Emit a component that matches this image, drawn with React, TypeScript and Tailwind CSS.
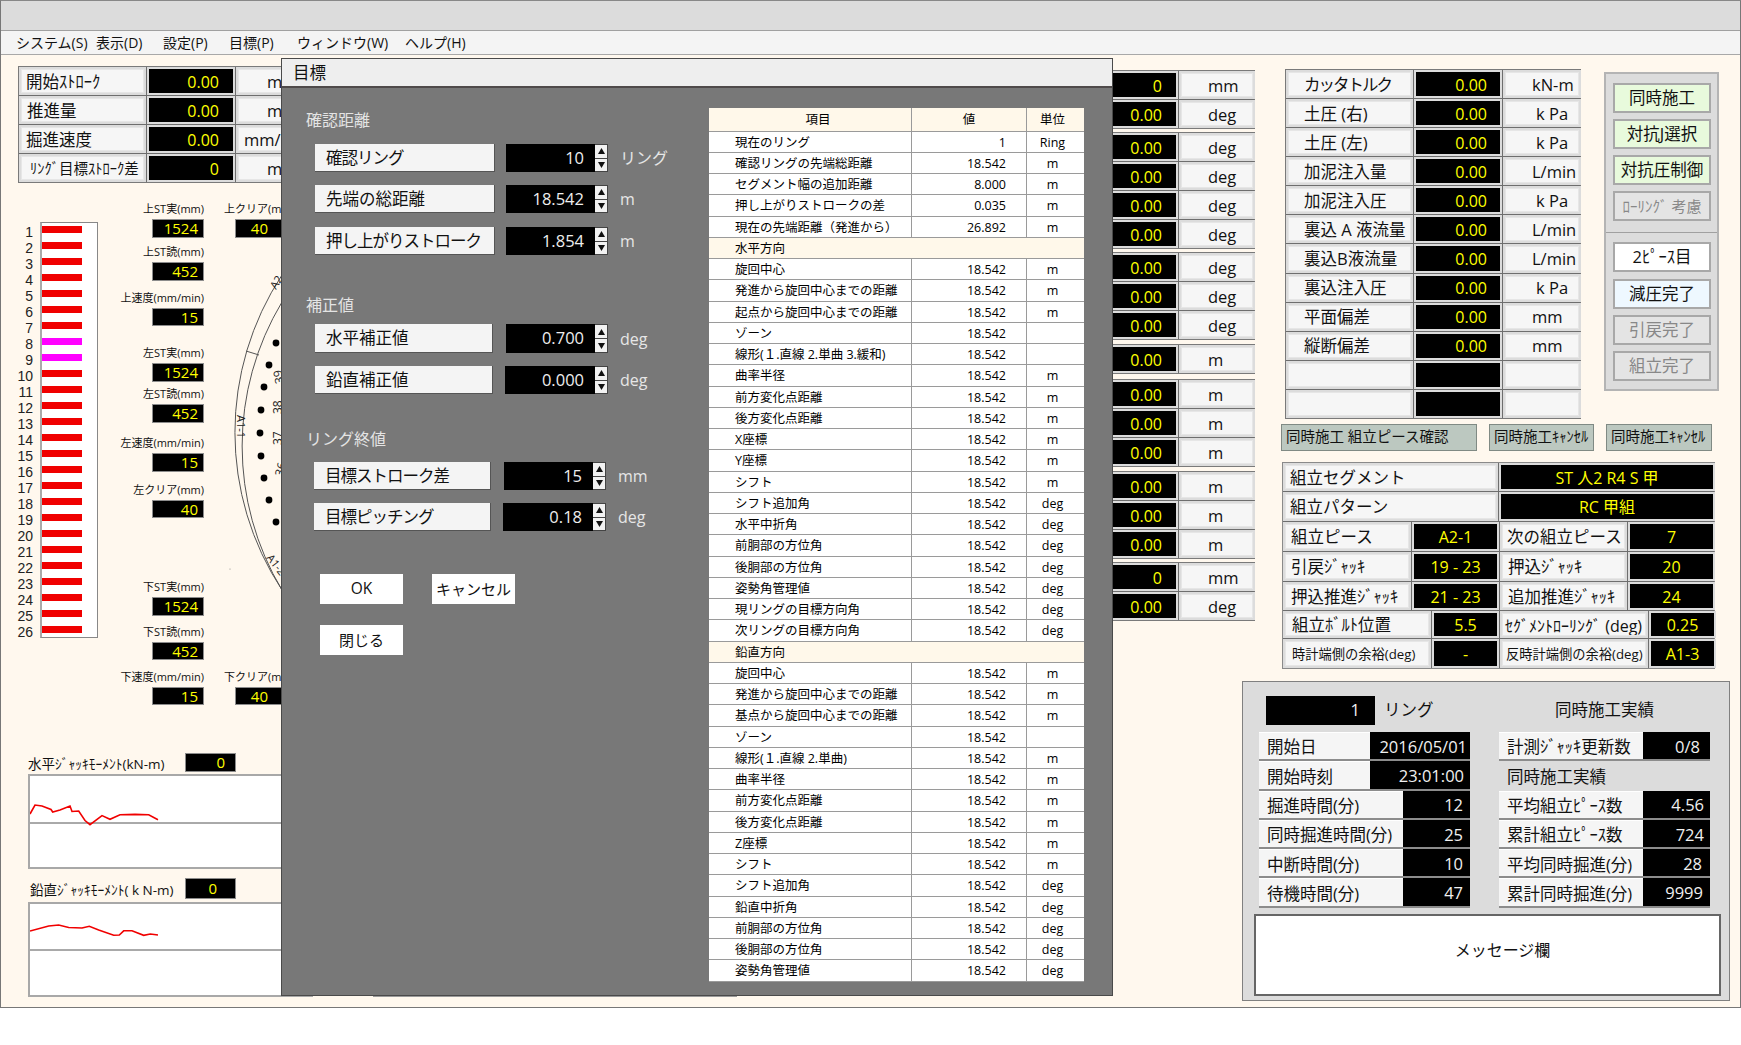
import React from "react";

const LabelCell = ({ children, className = "", pad = "pl-[14px]", size = "text-[16.5px]" }: any) => (
  <div className={`bg-[#dcdcdc] p-[2px] min-w-0 ${className}`}>
    <div className={`h-full flex items-center whitespace-nowrap overflow-hidden bg-[#f6f6f6] border border-[#e6e6e6] text-[#111] leading-none pt-[2px] ${pad} ${size}`}>
      {children}
    </div>
  </div>
);

const ValCell = ({ children, pr = "pr-[14px]", align = "justify-end" }: any) => (
  <div className="bg-[#dcdcdc] p-[2px] min-w-0">
    <div className={`h-full flex items-center bg-black text-[#ffff00] text-[16px] leading-none whitespace-nowrap pt-[1px] ${align} ${pr}`}>{children}</div>
  </div>
);

const GridTable = ({ cols, rows, className = "", children }: any) => (
  <div className={`grid gap-px bg-[#6e6e6e] border border-[#7a7a7a] ${cols} ${rows} ${className}`}>{children}</div>
);

const topLeft = [
  ["開始ｽﾄﾛｰｸ", "0.00", "m", "text-[16.5px]", "pl-[4px]", "pl-[28px]"],
  ["推進量", "0.00", "mm", "text-[16.5px]", "pl-[5px]", "pl-[28px]"],
  ["掘進速度", "0.00", "mm/min", "text-[16.5px]", "pl-[4px]", "pl-[5px]"],
  ["ﾘﾝｸﾞ目標ｽﾄﾛｰｸ差", "0", "mm", "text-[14.5px]", "pl-[8px]", "pl-[28px]"],
];

const readoutGroups = [
  { mt: "mt-[1px]", rows: [["0", "mm"], ["0.00", "deg"]] },
  { mt: "mt-[3px]", rows: [["0.00", "deg"], ["0.00", "deg"], ["0.00", "deg"], ["0.00", "deg"]] },
  { mt: "mt-[3px]", rows: [["0.00", "deg"], ["0.00", "deg"], ["0.00", "deg"]] },
  { mt: "mt-[4px]", rows: [["0.00", "m"]] },
  { mt: "mt-[5px]", rows: [["0.00", "m"], ["0.00", "m"], ["0.00", "m"]] },
  { mt: "mt-[4px]", rows: [["0.00", "m"], ["0.00", "m"], ["0.00", "m"]] },
  { mt: "mt-[3px]", rows: [["0", "mm"], ["0.00", "deg"]] },
];

const central = [
  ["カッタトルク", "0.00", "kN-m", "pl-[26px]"],
  ["土圧 (右)", "0.00", "k Pa", "pl-[30px]"],
  ["土圧 (左)", "0.00", "k Pa", "pl-[30px]"],
  ["加泥注入量", "0.00", "L/min", "pl-[26px]"],
  ["加泥注入圧", "0.00", "k Pa", "pl-[30px]"],
  ["裏込 A 液流量", "0.00", "L/min", "pl-[26px]"],
  ["裏込B液流量", "0.00", "L/min", "pl-[26px]"],
  ["裏込注入圧", "0.00", "k Pa", "pl-[30px]"],
  ["平面偏差", "0.00", "mm", "pl-[26px]"],
  ["縦断偏差", "0.00", "mm", "pl-[26px]"],
  ["", "", "", "pl-[26px]"],
  ["", "", "", "pl-[26px]"],
];

const readoutColumn = [
  { label: "上ST実(mm)", value: "1524", mt: "mt-[17px]", h: "h-[19px]" },
  { label: "上ST読(mm)", value: "452", mt: "mt-[5px]", h: "h-[19px]" },
  { label: "上速度(mm/min)", value: "15", mt: "mt-[8px]", h: "h-[18px]" },
  { label: "左ST実(mm)", value: "1524", mt: "mt-[18px]", h: "h-[19px]" },
  { label: "左ST読(mm)", value: "452", mt: "mt-[3px]", h: "h-[19px]" },
  { label: "左速度(mm/min)", value: "15", mt: "mt-[11px]", h: "h-[19px]" },
  { label: "左クリア(mm)", value: "40", mt: "mt-[9px]", h: "h-[18px]" },
  { label: "下ST実(mm)", value: "1524", mt: "mt-[60px]", h: "h-[19px]" },
  { label: "下ST読(mm)", value: "452", mt: "mt-[7px]", h: "h-[18px]" },
  { label: "下速度(mm/min)", value: "15", mt: "mt-[8px]", h: "h-[18px]" },
];

const Field = ({ value, className = "" }: any) => (
  <div className={`bg-black border border-[#8c8c8c] text-[#ffff00] text-[15px] leading-none flex items-center justify-end pr-[5px] ${className}`}>{value}</div>
);

const MidEntry = ({ label, value, mt, h }: any) => (
  <div className={`flex flex-col items-end ${mt}`}>
    <div className="h-[16px] flex items-center text-[11px] leading-none whitespace-nowrap text-[#111]">{label}</div>
    <Field value={value} className={`w-[52px] mt-[3px] ${h}`} />
  </div>
);

const dotPos = [
  [50, 93], [43, 115], [38, 137], [35, 160], [34, 183], [35, 206], [38, 228], [43, 250], [50, 272],
];

const Diagram = () => (
  <svg width="60" height="350" viewBox="0 0 60 350" className="block mt-[12px] shrink-0">
    <path d="M56 25 A287 287 0 0 0 56 340" fill="none" stroke="#555" strokeWidth="1" />
    <path d="M56 52 A280 280 0 0 0 56 340" fill="none" stroke="#555" strokeWidth="1" />
    <line x1="20" y1="101" x2="33" y2="105" stroke="#555" strokeWidth="1" />
    {dotPos.map(([x, y], i) => (
      <circle key={i} cx={x} cy={y} r="3.4" fill="#000" />
    ))}
    <circle cx="4" cy="319" r="0.6" fill="#888" />
    <text x="11" y="165" fontSize="11" fill="#222" transform="rotate(90 11 165)">A1-1</text>
    <text x="40" y="308" fontSize="11" fill="#222" transform="rotate(52 40 308)">A1-2</text>
    <text x="50" y="40" fontSize="11" fill="#222" transform="rotate(-58 50 40)">A2</text>
    <text x="56" y="164" fontSize="12" fill="#222" transform="rotate(-90 56 164)">38</text>
    <text x="56" y="195" fontSize="12" fill="#222" transform="rotate(-90 56 195)">37</text>
    <text x="57" y="227" fontSize="12" fill="#222" transform="rotate(-76 57 227)">36</text>
    <text x="58" y="133" fontSize="12" fill="#222" transform="rotate(-100 58 133)">39</text>
  </svg>
);

const Chart = ({ pts, line }: any) => (
  <div className="w-[285px] h-[95px] bg-white border-2 border-[#a8a8a8]">
    <svg viewBox="0 0 281 91" className="block w-full h-full">
      <line x1="0" x2="281" y1={line} y2={line} stroke="#555" strokeWidth="1" />
      <polyline points={pts} fill="none" stroke="#f00000" strokeWidth="1.6" />
    </svg>
  </div>
);

const Spinner = () => (
  <div className="w-[13px] flex flex-col gap-px bg-[#444] border border-[#444] border-l-0">
    <div className="flex-1 bg-[#f2f2f2] flex items-center justify-center">
      <svg width="7" height="6" viewBox="0 0 7 6"><path d="M3.5 0L7 6H0z" fill="#111" /></svg>
    </div>
    <div className="flex-1 bg-[#f2f2f2] flex items-center justify-center">
      <svg width="7" height="6" viewBox="0 0 7 6"><path d="M0 0H7L3.5 6z" fill="#111" /></svg>
    </div>
  </div>
);

const DlgRow = ({ label, value, unit, mt = "mt-[13px]", ml = "ml-[33px]", lw = "w-[180px]", vw = "w-[89px]", gap = "ml-[11px]", h = "h-[28px]", track = "" }: any) => (
  <div className={`flex items-stretch ${h} ${mt} ${ml}`}>
    <div className={`${lw} bg-[#f4f4f4] border-b border-r border-[#555] flex items-center pl-[11px] pt-[1px] text-[16.5px] leading-none whitespace-nowrap text-[#111] ${track}`}>{label}</div>
    <div className={`${gap} ${vw} bg-black text-[#eeeeee] text-[16.5px] leading-none flex items-center justify-end pr-[11px]`}>{value}</div>
    <Spinner />
    <div className="ml-[12px] flex items-center text-[16px] leading-none text-[#e6e6e6] whitespace-nowrap">{unit}</div>
  </div>
);

const DlgHead = ({ children, mt }: any) => (
  <div className={`h-[24px] flex items-center ml-[24px] text-[16px] leading-none text-[#e4e4e4] ${mt}`}>{children}</div>
);

const tableRows: [string, string, string][] = [
  ["現在のリング", "1", "Ring"],
  ["確認リングの先端総距離", "18.542", "m"],
  ["セグメント幅の追加距離", "8.000", "m"],
  ["押し上がりストロークの差", "0.035", "m"],
  ["現在の先端距離（発進から）", "26.892", "m"],
  ["水平方向", "#", ""],
  ["旋回中心", "18.542", "m"],
  ["発進から旋回中心までの距離", "18.542", "m"],
  ["起点から旋回中心までの距離", "18.542", "m"],
  ["ゾーン", "18.542", ""],
  ["線形(１.直線 2.単曲 3.緩和)", "18.542", ""],
  ["曲率半径", "18.542", "m"],
  ["前方変化点距離", "18.542", "m"],
  ["後方変化点距離", "18.542", "m"],
  ["X座標", "18.542", "m"],
  ["Y座標", "18.542", "m"],
  ["シフト", "18.542", "m"],
  ["シフト追加角", "18.542", "deg"],
  ["水平中折角", "18.542", "deg"],
  ["前胴部の方位角", "18.542", "deg"],
  ["後胴部の方位角", "18.542", "deg"],
  ["姿勢角管理値", "18.542", "deg"],
  ["現リングの目標方向角", "18.542", "deg"],
  ["次リングの目標方向角", "18.542", "deg"],
  ["鉛直方向", "#", ""],
  ["旋回中心", "18.542", "m"],
  ["発進から旋回中心までの距離", "18.542", "m"],
  ["基点から旋回中心までの距離", "18.542", "m"],
  ["ゾーン", "18.542", ""],
  ["線形(１.直線 2.単曲)", "18.542", "m"],
  ["曲率半径", "18.542", "m"],
  ["前方変化点距離", "18.542", "m"],
  ["後方変化点距離", "18.542", "m"],
  ["Z座標", "18.542", "m"],
  ["シフト", "18.542", "m"],
  ["シフト追加角", "18.542", "deg"],
  ["鉛直中折角", "18.542", "deg"],
  ["前胴部の方位角", "18.542", "deg"],
  ["後胴部の方位角", "18.542", "deg"],
  ["姿勢角管理値", "18.542", "deg"],
];

const Dialog = () => (
  <div className="absolute left-[280px] top-[57px] w-[832px] h-[938px] bg-[#787878] border border-[#4a4a4a] flex flex-col">
    <div className="h-[29px] shrink-0 bg-[#eeeeee] border-b-2 border-[#4f4a4a] flex items-center pl-[11px] pt-[2px] text-[16.5px] leading-none text-[#111]">目標</div>
    <div className="flex flex-1 min-h-0">
      <div className="w-[427px] shrink-0">
        <DlgHead mt="mt-[20px]">確認距離</DlgHead>
        <DlgRow label="確認リング" value="10" unit="リング" mt="mt-[12px]" track="tracking-[-1px]" />
        <DlgRow label="先端の総距離" value="18.542" unit="m" />
        <DlgRow label="押し上がりストローク" value="1.854" unit="m" mt="mt-[14px]" track="tracking-[-1px]" />
        <DlgHead mt="mt-[38px]">補正値</DlgHead>
        <DlgRow label="水平補正値" value="0.700" unit="deg" mt="mt-[7px]" lw="w-[178px]" gap="ml-[13px]" h="h-[29px]" />
        <DlgRow label="鉛直補正値" value="0.000" unit="deg" lw="w-[178px]" gap="ml-[12px]" vw="w-[90px]" />
        <DlgHead mt="mt-[33px]">リング終値</DlgHead>
        <DlgRow label="目標ストローク差" value="15" unit="mm" mt="mt-[11px]" ml="ml-[32px]" lw="w-[177px]" gap="ml-[13px]" vw="w-[89px]" track="tracking-[-1px]" />
        <DlgRow label="目標ピッチング" value="0.18" unit="deg" ml="ml-[32px]" lw="w-[177px]" gap="ml-[12px]" vw="w-[90px]" track="tracking-[-1px]" />
        <div className="flex mt-[43px] ml-[38px]">
          <div className="w-[83px] h-[30px] bg-white flex items-center justify-center text-[15.5px] leading-none text-[#111]">OK</div>
          <div className="w-[83px] h-[30px] ml-[29px] bg-white flex items-center justify-center text-[15px] leading-none text-[#111]">キャンセル</div>
        </div>
        <div className="w-[83px] h-[30px] mt-[21px] ml-[38px] bg-white flex items-center justify-center text-[15px] leading-none text-[#111]">閉じる</div>
      </div>
      <div className="pt-[20px]">
        <div className="w-[375px] grid grid-cols-[202px_114px_57px] grid-rows-[22.7px] auto-rows-[20.25px] gap-x-[1px] gap-y-px bg-[#9a9a9a] border-b border-[#9a9a9a]">
          <div className="bg-[#fff8ea] flex items-center justify-center pl-[16px] pt-[2px] text-[12.5px] leading-none text-black">項目</div>
          <div className="bg-[#fff8ea] flex items-center justify-center pt-[2px] text-[12.5px] leading-none text-black">値</div>
          <div className="bg-[#fff8ea] flex items-center justify-center pr-[6px] pt-[2px] text-[12.5px] leading-none text-black">単位</div>
          {tableRows.map(([a, b, c], i) =>
            b === "#" ? (
              <div key={i} className="col-span-3 bg-[#fff8ea] flex items-center pl-[26px] pt-[2px] text-[12.5px] leading-none text-black">{a}</div>
            ) : (
              <React.Fragment key={i}>
                <div className="bg-white flex items-center pl-[26px] pt-[2px] text-[12.5px] leading-none whitespace-nowrap text-black">{a}</div>
                <div className="bg-white flex items-center justify-end pr-[20px] pt-[2px] text-[12.5px] leading-none text-black">{b}</div>
                <div className="bg-white flex items-center justify-center pr-[6px] pt-[2px] text-[12.5px] leading-none text-black">{c}</div>
              </React.Fragment>
            )
          )}
        </div>
      </div>
    </div>
  </div>
);

const Btn = ({ children, cls = "bg-[#e8fadc] text-[#111]", mt = "mt-[6px]", size = "text-[16.5px]" }: any) => (
  <div className={`w-[98px] h-[30px] ${mt} border-2 border-[#a8a8a8] flex items-center justify-center ${size} leading-none whitespace-nowrap ${cls}`}>{children}</div>
);

const Cfm = ({ children, cls }: any) => (
  <div className={`h-[27px] bg-[#bcc8c0] border border-[#808a84] flex items-center pl-[4px] text-[14.5px] leading-none whitespace-nowrap text-[#111] ${cls}`}>{children}</div>
);

const BottomRow = ({ label, value, cols, pl = "pl-[8px]", pr = "pr-[7px]" }: any) => (
  <div className={`grid h-[29.3px] border-b-2 border-[#8c8c8c] ${cols}`}>
    <div className={`bg-[#f5f5f5] flex items-center border-t border-white pt-[3px] text-[16.5px] leading-none whitespace-nowrap text-[#111] ${pl}`}>{label}</div>
    <div className={`bg-black flex items-center justify-end pt-[3px] text-[#f0f0f0] text-[16.5px] leading-none ${pr}`}>{value}</div>
  </div>
);

export default function App() {
  return (
    <div className="w-[1741px] h-[1045px] bg-white overflow-hidden font-['Open_Sans','Noto_Sans_CJK_JP',sans-serif]">
      <div className="relative w-[1741px] h-[1008px] flex flex-col border border-[#777] border-t-[#888]">
        <div className="h-[30px] shrink-0 bg-[#dcdcdc] border-b border-[#a0a0a0]" />
        <div className="h-[24px] shrink-0 bg-[#f4f4f4] border-b border-[#a8a8a8] flex items-center text-[14px] leading-none text-[#111] pl-[15px]">
          <span className="w-[80px]">システム(S)</span>
          <span className="w-[67px]">表示(D)</span>
          <span className="w-[66px]">設定(P)</span>
          <span className="w-[68px]">目標(P)</span>
          <span className="w-[108px]">ウィンドウ(W)</span>
          <span>ヘルプ(H)</span>
        </div>
        <div className="flex-1 min-h-0 flex bg-[#fff8ee]">
          {/* left */}
          <div className="w-[1089px] shrink-0 pt-[11px] pl-[17px]">
            <GridTable cols="grid-cols-[127px_88px_90px]" rows="auto-rows-[28px]" className="w-[308px]">
              {topLeft.map(([l, v, u, s, p, up], i) => (
                <React.Fragment key={i}>
                  <LabelCell size={s} pad={p}>{l}</LabelCell>
                  <ValCell pr="pr-[14px]">{v}</ValCell>
                  <LabelCell pad={up} size="text-[16.5px]">{u}</LabelCell>
                </React.Fragment>
              ))}
            </GridTable>
            <div className="flex">
              <div className="w-[23px] mt-[41px] mr-[7px] flex flex-col items-end ml-[-8px] text-[14px] leading-none text-[#222] font-['Liberation_Sans',sans-serif] shrink-0">
                {Array.from({ length: 26 }, (_, i) => (
                  <div key={i} className="h-[16px] flex items-center">{i + 1}</div>
                ))}
              </div>
              <div className="w-[58px] h-[416px] mt-[39px] shrink-0 bg-white border border-[#888] border-l-[#aaa] border-l-2 pt-[3px]">
                {Array.from({ length: 26 }, (_, i) => (
                  <div key={i} className={`w-[40px] h-[7px] mb-[9px] ${i === 7 || i === 8 ? "bg-[#ff00ff]" : "bg-[#f00000]"}`} />
                ))}
              </div>
              <div className="w-[90px] ml-[16px] shrink-0">
                {readoutColumn.map((e) => (
                  <MidEntry key={e.label} {...e} />
                ))}
              </div>
              <div className="ml-[22px] shrink-0 w-[60px]">
                <div className="mt-[17px] ml-[-2px] h-[16px] flex items-center text-[11px] leading-none whitespace-nowrap text-[#111]">上クリア(mm)</div>
                <Field value="40" className="w-[70px] ml-[9px] mt-[3px] h-[19px] pr-[36px]" />
                <Diagram />
                <div className="mt-[68px] ml-[-2px] h-[16px] flex items-center text-[11px] leading-none whitespace-nowrap text-[#111]">下クリア(mm)</div>
                <Field value="40" className="w-[70px] ml-[9px] mt-[3px] h-[18px] pr-[36px]" />
              </div>
            </div>
            <div className="flex items-end ml-[10px]">
              <div className="w-[285px] shrink-0">
                <div className="mt-[48px] flex items-center h-[19px]">
                  <div className="w-[157px] mt-[4px] text-[13.5px] leading-none whitespace-nowrap text-[#111]">水平ｼﾞｬｯｷﾓｰﾒﾝﾄ(kN-m)</div>
                  <Field value="0" className="w-[51px] h-[19px] pr-[10px]" />
                </div>
                <div className="mt-[2px]">
                  <Chart line={47} pts="0,38 5,29 12,30 21,33.5 22.7,36 30,34 40,30 42,35.5 48.7,35 55,44.5 60,48.7 72,39.6 80,43.3 90,38.8 105,38.4 118.7,38.8 128,43.7" />
                </div>
                <div className="mt-[9px] flex items-center h-[21px]">
                  <div className="w-[157px] mt-[5px] pl-[2px] text-[13.5px] leading-none whitespace-nowrap text-[#111]">鉛直ｼﾞｬｯｷﾓｰﾒﾝﾄ( k N-m)</div>
                  <Field value="0" className="w-[51px] h-[21px] pr-[18px]" />
                </div>
                <div className="mt-[3px]">
                  <Chart line={46} pts="0,27 18.7,22 28.7,21 38.7,23.5 52,24 59.3,22.3 68.7,26 83.7,31.3 89.3,31 93.7,26.8 102,26.8 113.7,31.3 120.3,30 128,31" />
                </div>
              </div>
              <div className="w-[364px] h-[120px] ml-[60px] bg-white border-b-2 border-[#9a9a9a]" />
            </div>
          </div>

          {/* right */}
          <div className="flex-1 min-w-0 pt-[14px]">
            <div className="flex">
              <div className="w-[165px] shrink-0">
                {readoutGroups.map((g, i) => (
                  <GridTable key={i} cols="grid-cols-[87px_76px]" rows="auto-rows-[28px]" className={g.mt}>
                    {g.rows.map(([v, u], j) => (
                      <React.Fragment key={j}>
                        <ValCell pr="pr-[14px]">{v}</ValCell>
                        <LabelCell pad="pl-[26px]">{u}</LabelCell>
                      </React.Fragment>
                    ))}
                  </GridTable>
                ))}
              </div>
              <div className="ml-[26px] w-[440px] shrink-0">
                <div className="flex ml-[4px]">
                  <GridTable cols="grid-cols-[127px_88px_78px]" rows="auto-rows-[28.08px]" className="w-[296px] h-[350px] shrink-0">
                    {central.map(([l, v, u, up], i) => (
                      <React.Fragment key={i}>
                        <LabelCell pad="pl-[15px]"><span className={i === 0 ? "tracking-[-2px]" : ""}>{l}</span></LabelCell>
                        <ValCell pr="pr-[13px]">{v}</ValCell>
                        <LabelCell pad={up}>{u}</LabelCell>
                      </React.Fragment>
                    ))}
                  </GridTable>
                  <div className="w-[115px] h-[319px] ml-[23px] mt-[3px] shrink-0 bg-[#dcdcdc] border-2 border-[#b4b4b4] pl-[7px] pt-[9px]">
                    <Btn mt="mt-0">同時施工</Btn>
                    <Btn>対抗J選択</Btn>
                    <Btn>対抗圧制御</Btn>
                    <Btn cls="bg-[#e4e4e4] text-[#888]" size="text-[15px]">ﾛｰﾘﾝｸﾞ 考慮</Btn>
                    <div className="h-px bg-[#a0a0a0] mt-[11px] ml-[-7px] w-[111px]" />
                    <Btn cls="bg-white text-[#111]" mt="mt-[9px]">2ﾋﾟｰｽ目</Btn>
                    <Btn cls="bg-[#eef8ff] text-[#111]" mt="mt-[7px]">減圧完了</Btn>
                    <Btn cls="bg-[#e4e4e4] text-[#888]">引戻完了</Btn>
                    <Btn cls="bg-[#e4e4e4] text-[#888]">組立完了</Btn>
                  </div>
                </div>
                <div className="flex mt-[5px]">
                  <Cfm cls="w-[196px]">同時施工 組立ピース確認</Cfm>
                  <Cfm cls="w-[105px] ml-[12px]">同時施工ｷｬﾝｾﾙ</Cfm>
                  <Cfm cls="w-[106px] ml-[12px]">同時施工ｷｬﾝｾﾙ</Cfm>
                </div>
                <div className="w-[433px] mt-[11px] ml-[1px] flex flex-col gap-px bg-[#6e6e6e] border border-[#8a8a8a]">
                  <div className="grid grid-cols-[215px_216px] gap-px h-[28px]">
                    <LabelCell pad="pl-[4px]">組立セグメント</LabelCell>
                    <ValCell align="justify-center" pr="">ST 人2 R4 S 甲</ValCell>
                  </div>
                  <div className="grid grid-cols-[215px_216px] gap-px h-[29px]">
                    <LabelCell pad="pl-[4px]">組立パターン</LabelCell>
                    <ValCell align="justify-center" pr="">RC 甲組</ValCell>
                  </div>
                  <div className="grid grid-cols-[128px_87px_127px_87px] gap-px h-[29px]">
                    <LabelCell pad="pl-[5px]">組立ピース</LabelCell>
                    <ValCell align="justify-center" pr="">A2-1</ValCell>
                    <LabelCell pad="pl-[4px]">次の組立ピース</LabelCell>
                    <ValCell align="justify-center" pr="">7</ValCell>
                  </div>
                  <div className="grid grid-cols-[128px_87px_127px_87px] gap-px h-[29px]">
                    <LabelCell pad="pl-[5px]">引戻ｼﾞｬｯｷ</LabelCell>
                    <ValCell align="justify-center" pr="">19 - 23</ValCell>
                    <LabelCell pad="pl-[5px]">押込ｼﾞｬｯｷ</LabelCell>
                    <ValCell align="justify-center" pr="">20</ValCell>
                  </div>
                  <div className="grid grid-cols-[128px_87px_127px_87px] gap-px h-[28px]">
                    <LabelCell pad="pl-[5px]">押込推進ｼﾞｬｯｷ</LabelCell>
                    <ValCell align="justify-center" pr="">21 - 23</ValCell>
                    <LabelCell pad="pl-[5px]">追加推進ｼﾞｬｯｷ</LabelCell>
                    <ValCell align="justify-center" pr="">24</ValCell>
                  </div>
                  <div className="grid grid-cols-[148px_67px_148px_67px] gap-px h-[27px]">
                    <LabelCell pad="pl-[6px]">組立ﾎﾞﾙﾄ位置</LabelCell>
                    <ValCell align="justify-center" pr="">5.5</ValCell>
                    <LabelCell pad="pl-[2px]" size="text-[16px]">ｾｸﾞﾒﾝﾄﾛｰﾘﾝｸﾞ (deg)</LabelCell>
                    <ValCell align="justify-center" pr="">0.25</ValCell>
                  </div>
                  <div className="grid grid-cols-[148px_67px_148px_67px] gap-px h-[29px]">
                    <LabelCell pad="pl-[6px]" size="text-[13.25px]">時計端側の余裕(deg)</LabelCell>
                    <ValCell align="justify-center" pr="">-</ValCell>
                    <LabelCell pad="pl-[3px]" size="text-[13.25px]">反時計端側の余裕(deg)</LabelCell>
                    <ValCell align="justify-center" pr="">A1-3</ValCell>
                  </div>
                </div>
              </div>
            </div>

            <div className="w-[488px] h-[320px] ml-[152px] mt-[12px] bg-[#dcdcdc] border border-[#808080]">
              <div className="flex items-center mt-[14px] ml-[23px] h-[29px]">
                <div className="w-[109px] h-[29px] bg-black text-[#f0f0f0] text-[16.5px] leading-none flex items-center justify-end pr-[15px]">1</div>
                <div className="ml-[9px] w-[171px] text-[16.5px] leading-none text-[#111]">リング</div>
                <div className="text-[16.5px] leading-none text-[#111]">同時施工実績</div>
              </div>
              <div className="flex mt-[7px] ml-[16px]">
                <div className="w-[211px] flex flex-col">
                  <BottomRow label="開始日" value="2016/05/01" cols="grid-cols-[111px_100px]" pr="pr-[3px]" />
                  <BottomRow label="開始時刻" value="23:01:00" cols="grid-cols-[111px_100px]" pr="pr-[6px]" />
                  <BottomRow label="掘進時間(分)" value="12" cols="grid-cols-[144px_67px]" />
                  <BottomRow label="同時掘進時間(分)" value="25" cols="grid-cols-[144px_67px]" />
                  <BottomRow label="中断時間(分)" value="10" cols="grid-cols-[144px_67px]" />
                  <BottomRow label="待機時間(分)" value="47" cols="grid-cols-[144px_67px]" />
                </div>
                <div className="w-[211px] ml-[29px] flex flex-col">
                  <BottomRow label="計測ｼﾞｬｯｷ更新数" value="0/8" cols="grid-cols-[144px_67px]" pr="pr-[10px]" />
                  <div className="h-[29.3px] flex items-center pl-[8px] pt-[3px] text-[16.5px] leading-none text-[#111]">同時施工実績</div>
                  <BottomRow label="平均組立ﾋﾟｰｽ数" value="4.56" cols="grid-cols-[144px_67px]" pr="pr-[6px]" />
                  <BottomRow label="累計組立ﾋﾟｰｽ数" value="724" cols="grid-cols-[144px_67px]" pr="pr-[6px]" />
                  <BottomRow label="平均同時掘進(分)" value="28" cols="grid-cols-[144px_67px]" pr="pr-[8px]" />
                  <BottomRow label="累計同時掘進(分)" value="9999" cols="grid-cols-[144px_67px]" pr="pr-[7px]" />
                </div>
              </div>
              <div className="w-[467px] h-[82px] ml-[11px] mt-[6px] bg-white border-2 border-[#666] flex items-center justify-center pb-[10px] pl-[30px] text-[16px] leading-none text-[#111]">メッセージ欄</div>
            </div>
          </div>
        </div>
        <Dialog />
      </div>
    </div>
  );
}
